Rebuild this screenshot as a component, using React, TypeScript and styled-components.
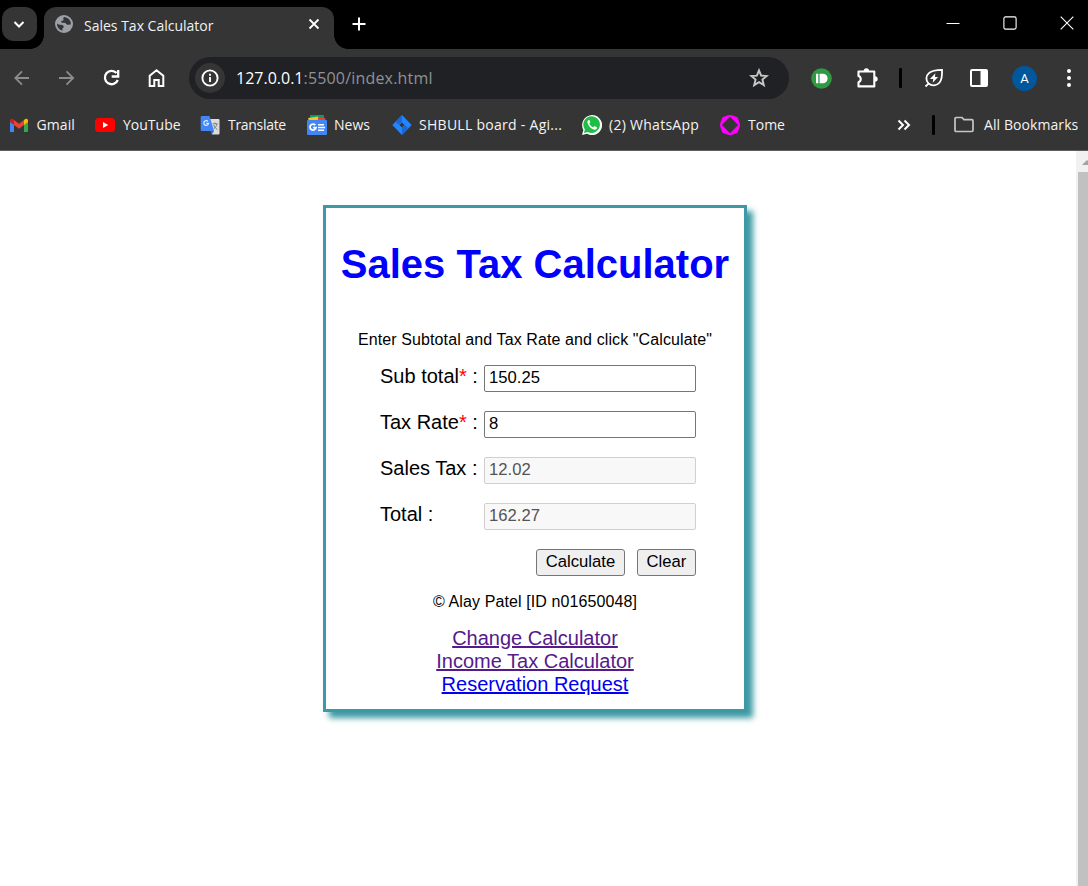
import React from "react";
import styled, { createGlobalStyle } from "styled-components";

const Global = createGlobalStyle`
  html, body { margin: 0; padding: 0; height: 100%; overflow: hidden; background: #fff; }
  *, *::before, *::after { box-sizing: border-box; }
`;

const uiFont = `"Open Sans", "Noto Sans", sans-serif`;
const pageFont = `"Liberation Sans", Arial, sans-serif`;

const Window = styled.div`
  display: flex;
  flex-direction: column;
  width: 1088px;
  height: 886px;
  overflow: hidden;
  background: #fff;
`;

/* ---------- tab strip ---------- */
const TabStrip = styled.div`
  display: flex;
  flex: none;
  height: 49px;
  padding: 7px 0 0 2px;
  background: #000;
`;
const TabSearch = styled.button`
  position: relative;
  z-index: 1;
  display: grid;
  place-items: center;
  width: 35px;
  height: 34px;
  margin: 0 7px 0 0;
  padding: 0 1px 0 0;
  border: 0;
  border-radius: 12px;
  background: #353535;
`;
const Tab = styled.div`
  position: relative;
  display: flex;
  align-items: center;
  width: 290px;
  height: 42px;
  padding: 0 13px 8px 11px;
  border-radius: 12px 12px 0 0;
  background: #353535;
  &::before, &::after {
    content: "";
    position: absolute;
    bottom: 0;
    width: 14px;
    height: 14px;
  }
  &::before { left: -14px; background: radial-gradient(circle at 0 0, #000 13.5px, #353535 14.2px); }
  &::after { right: -14px; background: radial-gradient(circle at 100% 0, #000 13.5px, #353535 14.2px); }
`;
const TabTitle = styled.span`
  flex: 1;
  margin-left: 11px;
  padding-top: 3px;
  font: 14px/20px ${uiFont};
  letter-spacing: 0;
  color: #f1f1f1;
  white-space: nowrap;
`;
const NewTab = styled.div`
  display: grid;
  place-items: center;
  width: 34px;
  height: 34px;
  margin-left: 8px;
`;
const WindowControls = styled.div`
  display: flex;
  gap: 43px;
  margin: 9px 14px 0 auto;
`;

/* ---------- toolbar ---------- */
const Toolbar = styled.div`
  display: flex;
  flex: none;
  align-items: center;
  height: 58px;
  padding-left: 12px;
  background: #353535;
`;
const NavButtons = styled.div`
  display: flex;
  gap: 25px;
  width: 177px;
`;
const AddressBar = styled.div`
  display: flex;
  align-items: center;
  width: 600px;
  height: 42px;
  padding: 0 20px 0 6px;
  border-radius: 21px;
  background: #202124;
`;
const SiteInfo = styled.div`
  display: grid;
  place-items: center;
  width: 30px;
  height: 30px;
  border-radius: 50%;
  background: #353535;
`;
const Url = styled.span`
  flex: 1;
  margin-left: 11px;
  font: 16px/22px ${uiFont};
  color: #8f9296;
  white-space: nowrap;
  letter-spacing: 0.18px;
`;
const Host = styled.span`
  color: #fff;
  letter-spacing: 0;
`;
const Extensions = styled.div`
  display: flex;
  align-items: center;
  margin-left: 22px;
`;
const Slot = styled.div<{ $w: number }>`
  display: grid;
  justify-items: start;
  align-items: center;
  flex: none;
  width: ${(p) => p.$w}px;
`;
const Divider = styled.span`
  flex: none;
  width: 3px;
  height: 20px;
  border-radius: 1px;
  background: #000;
`;
const Avatar = styled.div`
  display: grid;
  place-items: center;
  width: 25px;
  height: 25px;
  border-radius: 50%;
  background: #01579b;
  color: #fff;
  font: 13px/25px Roboto, sans-serif;
`;

/* ---------- bookmarks ---------- */
const Bookmarks = styled.div`
  display: flex;
  flex: none;
  align-items: center;
  height: 44px;
  padding: 0 0 7px 9px;
  border-bottom: 1px solid #5e5e5e;
  background: #353535;
`;
const Bookmark = styled.div<{ $w: number; $gap: number }>`
  display: flex;
  flex: none;
  align-items: center;
  gap: ${(p) => p.$gap}px;
  width: ${(p) => p.$w}px;
`;
const Label = styled.span<{ $ls?: number }>`
  font: 14px/20px ${uiFont};
  letter-spacing: ${(p) => p.$ls ?? 0}px;
  color: #f3f3f3;
  white-space: nowrap;
`;
const BookmarksEnd = styled.div`
  display: flex;
  align-items: center;
  margin-left: auto;
  width: 191px;
`;

/* ---------- page ---------- */
const Viewport = styled.div`
  display: flex;
  flex: 1;
  background: #fff;
`;
const Page = styled.main`
  flex: 1;
  padding: 54px 0 0 323px;
`;
const ScrollTrack = styled.div`
  display: flex;
  flex-direction: column;
  width: 12px;
  padding-left: 2px;
  background: #f1f1f1;
`;
const ScrollArrow = styled.svg`
  display: block;
  width: 10px;
  height: 21px;
`;
const ScrollThumb = styled.div`
  flex: 1;
  background: #c1c1c1;
`;
const Card = styled.section`
  display: flex;
  flex-direction: column;
  width: 424px;
  height: 507px;
  padding-top: 33px;
  border: 3px solid #3d9aa5;
  box-shadow: 6px 6px 6px #3d9aa5;
  background: #fff;
  color: #000;
  font: 20px/23px ${pageFont};
`;
const Heading = styled.h1`
  margin: 0;
  font: bold 40px/46px ${pageFont};
  color: #00f;
  text-align: center;
  white-space: nowrap;
`;
const Note = styled.p<{ $top: number }>`
  margin: ${(p) => p.$top}px 0 0;
  font-size: 16px;
  line-height: 18px;
  letter-spacing: 0.1px;
  text-align: center;
`;
const Form = styled.form`
  display: grid;
  grid-template-columns: 104px 212px;
  grid-auto-rows: 27px;
  row-gap: 19px;
  margin: 16px 0 0 54px;
`;
const FieldLabel = styled.label`
  white-space: nowrap;
`;
const Required = styled.span`
  color: #f00;
`;
const Field = styled.input`
  width: 212px;
  height: 27px;
  margin: 0;
  padding: 0 4px 2px;
  border: 1px solid #767676;
  border-radius: 2px;
  background: #fff;
  color: #000;
  font: 16.67px ${pageFont};
  &:disabled {
    border-color: #d0d0d0;
    background: #f8f8f8;
    color: #545454;
  }
`;
const Actions = styled.div`
  display: flex;
  grid-column: 2;
  justify-content: flex-end;
  gap: 12px;
`;
const Button = styled.button<{ $w: number }>`
  width: ${(p) => p.$w}px;
  height: 27px;
  padding: 0 0 2px;
  border: 1px solid #767676;
  border-radius: 3px;
  background: #efefef;
  color: #000;
  font: 16.67px ${pageFont};
`;
const Links = styled.nav`
  display: flex;
  flex-direction: column;
  align-items: center;
  margin-top: 16px;
`;
const Link = styled.a<{ $visited?: boolean }>`
  color: ${(p) => (p.$visited ? "#551a8b" : "#0000ee")};
  text-decoration: underline;
`;

/* ---------- icons ---------- */
const Svg = styled.svg`
  display: block;
  flex: none;
  fill: none;
`;
type IconProps = { size?: number; color?: string; sw?: number; children: React.ReactNode };
const Icon = ({ size = 20, color = "#fff", sw = 2, children }: IconProps) => (
  <Svg width={size} height={size} viewBox={`0 0 ${size} ${size}`} stroke={color} strokeWidth={sw}>
    {children}
  </Svg>
);

const Globe = () => (
  <Icon size={18} color="none">
    <circle cx="9" cy="9" r="9" fill="#9aa0a6" />
    <path d="M9.200 2c-.9.5-1.300 1.600-.7 2.300.8.9-.6 1.500-1.500 1.500-.9 0-1 .9-.5 1.600.5.8 1.800.2 3 .4 1.600.2 1.500 1.700 2.900 1.900.9.100 1.700-.4 3.400-.2A7 7 0 0 0 9.200 2z M2 8.400c1 .9 2.300 1.300 3.900 1.300 1.700 0 2.900.9 2.800 2.300 0 .9-1.300.9-1.300 2v1.800A7 7 0 0 1 2 8.400z" fill="#353535" />
  </Icon>
);
const Star = () => (
  <Icon color="#c7c7c7" sw={1.900}>
    <path d="M10 2.400l2.100 5.200 5.600.4-4.300 3.600 1.400 5.500L10 14.100l-4.800 3 1.400-5.500L2.300 8l5.600-.4z" />
  </Icon>
);
const Puzzle = () => (
  <Icon size={22} sw={2.100}>
    <path d="M2.500 4.500H18.300V19.400H2.500v-4.200c3-.9 3-5.300 0-6.200z" strokeLinejoin="round" />
    <path d="M7.700 4.200a2.700 2.900 0 0 1 5.400 0z M18.800 9.200a2.900 2.700 0 0 1 0 5.400z" fill="#fff" stroke="none" />
  </Icon>
);
const Leaf = () => (
  <Icon sw={1.800}>
    <path d="M1.500 18.500l2.700-2.700M18 1.900c.3 6-.3 10-2.400 12.600-2.700 3.300-7.700 3.900-11 1-3-2.900-3-7.600.3-10.400C7.600 2.800 12 2 18 1.900z" />
    <path d="M11.400 5.200L5.900 11h3.300l-.5 3.700 5.400-5.600h-3.200z" fill="#fff" stroke="none" />
  </Icon>
);

const GmailIcon = () => (
  <Icon color="none">
    <path d="M1 17V6l4 3v8H2.200A1.200 1.200 0 0 1 1 17z" fill="#4285f4" />
    <path d="M15 17V9l4-3v9.800a1.200 1.200 0 0 1-1.200 1.200z" fill="#34a853" />
    <path d="M15 5l1.300-1c1.200-.9 2.700 0 2.700 1.300V7l-4 3z" fill="#fbbc04" />
    <path d="M5 5l5 3.800L15 5v5l-5 3.800L5 10z" fill="#ea4335" />
    <path d="M1 5.300C1 4 2.500 3.100 3.700 4L5 5v5L1 7z" fill="#c5221f" />
  </Icon>
);
const YouTubeIcon = () => (
  <Icon color="none">
    <rect x="0" y="3" width="20" height="14" rx="3.500" fill="#f00" />
    <path d="M8 7l5.200 3L8 13z" fill="#fff" />
  </Icon>
);
const TranslateIcon = () => (
  <Icon color="none">
    <path d="M8 4h10.200c.8 0 1.300.5 1.300 1.300v12.900c0 .8-.5 1.300-1.300 1.300H12z" fill="#dcdcdc" />
    <path d="M10.500 16H14l-2.200 3.400z" fill="#3367d6" />
    <path d="M2 1h7.500l4.600 15H2C1.200 16 .7 15.500.7 14.700V2.300C.7 1.500 1.200 1 2 1z" fill="#4285f4" />
    <path d="M8 6.400A2.400 2.400 0 1 0 8.600 8.300H6.300" stroke="#e3edff" strokeWidth="1.200" />
    <path d="M12.700 8.800h5M15.200 7.600v1.200M17 9c-.4 2.200-1.800 3.700-3 4.500M13.600 10c.8 1.900 2.200 3.400 3.800 4.700" stroke="#717d82" strokeWidth="1" />
  </Icon>
);
const NewsIcon = () => (
  <Icon color="none">
    <path d="M3 0h14v6H3z" fill="#0c9d58" />
    <path d="M1 3l10-1.500L13 6H2z" fill="#fbc02d" />
    <path d="M11 2l7.500 1.300L18 6h-7z" fill="#ea4335" />
    <rect x="0" y="5" width="20" height="15" rx="1" fill="#4285f4" />
    <path d="M8.300 10.100A3 3 0 1 0 9 12.600H6.100" stroke="#fff" strokeWidth="1.800" />
    <path d="M11 9.700h6M11 12.500h7M11 15.200h6" stroke="#fff" strokeWidth="1.500" />
  </Icon>
);
const JiraIcon = () => (
  <Icon color="none">
    <path d="M10 0l9.700 10L10 20 .3 10z" fill="#2684ff" />
    <path d="M10 0v6.900L6.900 10 4 7z" fill="#1668dc" />
    <path d="M10 20v-6.900l3.100-3.100L16 13z" fill="#1668dc" />
    <path d="M10 7.500l2.500 2.500-2.500 2.500L7.500 10z" fill="#353535" />
  </Icon>
);
const WhatsAppIcon = () => (
  <Icon color="none">
    <path d="M0 20l1.400-5A10 10 0 1 1 5 18.700z" fill="#fff" />
    <path d="M1.900 18.100l1-3.600A8.300 8.300 0 1 1 5.800 17z" fill="#1fbd45" />
    <path d="M6.700 5c-.9.500-1.500 1.500-1.200 2.800.8 3.300 3.600 6.100 6.900 6.900 1.300.2 2.300-.5 2.600-1.700v-.8l-2.500-1.200-1.300 1.300c-1.900-.8-3.200-2.200-3.900-3.900l1-1.200L7.400 5z" fill="#fff" />
  </Icon>
);
const TomeIcon = () => (
  <Icon color="none">
    <path fillRule="evenodd" d="M8 .3Q10-.2 12 .3L17.500 2.300 19.700 8Q20.200 10 19.700 12L17.500 17.700 12 19.700Q10 20.200 8 19.700L2.500 17.700.3 12Q-.2 10 .3 8L2.500 2.300z M10 1.800L1.900 10 10 18.200 18.100 10z" fill="#f0f" />
  </Icon>
);

const bookmarks = [
  { name: "Gmail", icon: <GmailIcon />, width: 86, gap: 7.5, ls: 0.1 },
  { name: "YouTube", icon: <YouTubeIcon />, width: 105, gap: 8, ls: 0 },
  { name: "Translate", icon: <TranslateIcon />, width: 107, gap: 8, ls: -0.3 },
  { name: "News", icon: <NewsIcon />, width: 85, gap: 7, ls: 0 },
  { name: "SHBULL board - Agi...", icon: <JiraIcon />, width: 190, gap: 7, ls: 0.28 },
  { name: "(2) WhatsApp", icon: <WhatsAppIcon />, width: 138, gap: 7, ls: 0.28 },
  { name: "Tome", icon: <TomeIcon />, width: 80, gap: 8, ls: 0 },
];

const fields = [
  { label: "Sub total", required: true, value: "150.25" },
  { label: "Tax Rate", required: true, value: "8" },
  { label: "Sales Tax", required: false, value: "12.02" },
  { label: "Total", required: false, value: "162.27" },
];

export default function App() {
  return (
    <>
      <Global />
      <Window>
        <TabStrip>
          <TabSearch aria-label="Search tabs">
            <Icon size={12}><path d="M1.500 4L6 8.500 10.500 4" /></Icon>
          </TabSearch>
          <Tab>
            <Globe />
            <TabTitle>Sales Tax Calculator</TabTitle>
            <Icon size={14} sw={1.800}><path d="M2.500 2.500l9 9M11.500 2.500l-9 9" /></Icon>
          </Tab>
          <NewTab>
            <Icon size={14}><path d="M7 .5v13M.5 7h13" /></Icon>
          </NewTab>
          <WindowControls>
            <Icon size={14} sw={1}><path d="M.5 7.500h13" /></Icon>
            <Icon size={14} sw={1.100}><rect x=".9" y=".9" width="12.200" height="12.200" rx="1.500" /></Icon>
            <Icon size={14} sw={1.100}><path d="M.7.700l12.600 12.600M13.300.7L.7 13.300" /></Icon>
          </WindowControls>
        </TabStrip>

        <Toolbar>
          <NavButtons>
            <Icon color="#8c8c8c" sw={1.800}><path d="M17 10H3.500M10 3.300L3.300 10l6.700 6.700" /></Icon>
            <Icon color="#8c8c8c" sw={1.800}><path d="M2 10h14M9.500 3.300l6.700 6.700-6.700 6.700" /></Icon>
            <Icon sw={2.300}>
              <path d="M14.600 5.100A6.700 6.700 0 1 0 15.800 12" />
              <path d="M16.200 2v6.500H9.700" />
            </Icon>
            <Icon>
              <path d="M2.700 18V7.700L9.500 2.300l6.800 5.400V18h-4.600v-6H7.300v6z" />
            </Icon>
          </NavButtons>
          <AddressBar>
            <SiteInfo>
              <Icon size={18} sw={1.900}>
                <circle cx="9" cy="9" r="7.600" />
                <path d="M9 8v5M9 4.800v2" />
              </Icon>
            </SiteInfo>
            <Url><Host>127.0.0.1</Host>:5500/index.html</Url>
            <Star />
          </AddressBar>
          <Extensions>
            <Slot $w={45}>
              <Icon size={21} color="none">
                <circle cx="10.500" cy="10.500" r="10.300" fill="#2f9a43" />
                <path d="M5 5.700h2.300v9.600H5zM8.600 5.700h3.200a4.800 4.800 0 0 1 0 9.600H8.600z" fill="#fff" />
              </Icon>
            </Slot>
            <Slot $w={43}><Puzzle /></Slot>
            <Slot $w={25}><Divider /></Slot>
            <Slot $w={45}><Leaf /></Slot>
            <Slot $w={43}>
              <Icon>
                <rect x="2" y="2" width="16" height="16" rx="1" />
                <path d="M11.500 2H18v16h-6.500z" fill="#fff" stroke="none" />
              </Icon>
            </Slot>
            <Slot $w={47}><Avatar>A</Avatar></Slot>
            <Icon color="none">
              <g fill="#fff">
                <circle cx="10" cy="3" r="2" />
                <circle cx="10" cy="10" r="2" />
                <circle cx="10" cy="17" r="2" />
              </g>
            </Icon>
          </Extensions>
        </Toolbar>

        <Bookmarks>
          {bookmarks.map((b) => (
            <Bookmark key={b.name} $w={b.width} $gap={b.gap}>
              {b.icon}
              <Label $ls={b.ls}>{b.name}</Label>
            </Bookmark>
          ))}
          <BookmarksEnd>
            <Slot $w={35}>
              <Icon size={14}><path d="M1.500 2.500L6 7l-4.500 4.500M7.500 2.500L12 7l-4.500 4.500" /></Icon>
            </Slot>
            <Slot $w={22}><Divider /></Slot>
            <Slot $w={30}>
              <Icon color="#c7c7c7" sw={1.700}>
                <path d="M1 3.700Q1 2.500 2.200 2.500H8l2 2.200h7.800Q19 4.700 19 5.900v9.400Q19 16.500 17.800 16.500H2.200Q1 16.500 1 15.300z" />
              </Icon>
            </Slot>
            <Label $ls={0.08}>All Bookmarks</Label>
          </BookmarksEnd>
        </Bookmarks>

        <Viewport>
          <Page>
            <Card>
              <Heading>Sales Tax Calculator</Heading>
              <Note $top={44}>Enter Subtotal and Tax Rate and click "Calculate"</Note>
              <Form onSubmit={(e) => e.preventDefault()}>
                {fields.map((f) => (
                  <React.Fragment key={f.label}>
                    <FieldLabel>
                      {f.label}
                      {f.required && <Required>*</Required>} :
                    </FieldLabel>
                    <Field defaultValue={f.value} disabled={!f.required} />
                  </React.Fragment>
                ))}
                <Actions>
                  <Button $w={89}>Calculate</Button>
                  <Button $w={59}>Clear</Button>
                </Actions>
              </Form>
              <Note $top={17}>© Alay Patel [ID n01650048]</Note>
              <Links>
                <Link href="#" $visited>Change Calculator</Link>
                <Link href="#" $visited>Income Tax Calculator</Link>
                <Link href="#">Reservation Request</Link>
              </Links>
            </Card>
          </Page>
          <ScrollTrack>
            <ScrollArrow viewBox="0 0 10 21">
              <path d="M4 14l5-5 5 5z" fill="#a3a3a3" />
            </ScrollArrow>
            <ScrollThumb />
          </ScrollTrack>
        </Viewport>
      </Window>
    </>
  );
}
